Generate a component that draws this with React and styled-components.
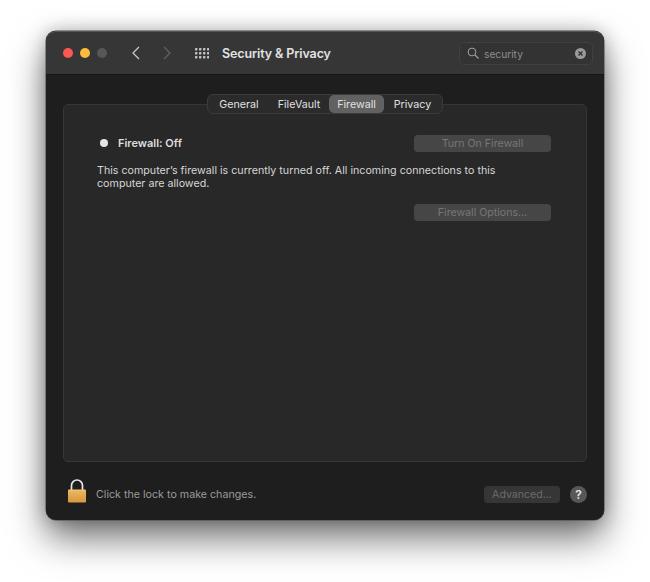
import React from 'react';
import styled, { createGlobalStyle } from 'styled-components';

const GlobalStyle = createGlobalStyle`
  html, body {
    margin: 0;
    padding: 0;
    background: #ffffff;
  }
  body {
    font-family: Inter, "Liberation Sans", sans-serif;
  }
`

const Page = styled.div`
  width: 650px;
  height: 582px;
  box-sizing: border-box;
  padding: 31px 46px 62px;
  overflow: hidden;
`

const Window = styled.div`
  height: 489px;
  display: flex;
  flex-direction: column;
  box-sizing: border-box;
  border-radius: 10px;
  background: #1e1e1e;
  box-shadow: 0 0 0 0.5px #4a4a4a, 0 18px 36px rgba(0, 0, 0, 0.55), 0 0 18px rgba(0, 0, 0, 0.25);
`

const TitleBar = styled.div`
  height: 44px;
  flex: none;
  display: flex;
  align-items: center;
  padding: 0 11px 0 17px;
  background: #363636;
  border-radius: 10px 10px 0 0;
  border-top: 1px solid #555;
  border-bottom: 1px solid #151515;
  box-sizing: border-box;
`

const Lights = styled.div`
  display: flex;
  gap: 7px;
  margin-right: 24px;
`

const Light = styled.span`
  width: 10px;
  height: 10px;
  border-radius: 50%;
  background: ${p => p.color};
`

const NavIcon = styled.svg`
  width: 10px;
  height: 14px;
  margin-right: 21px;
  flex: none;
`

const GridIcon = styled.svg`
  width: 14px;
  height: 11px;
  margin-left: 2px;
  flex: none;
`

const Title = styled.div`
  margin-left: 13px;
  font-size: 12.5px;
  font-weight: 600;
  color: #e2e2e2;
  letter-spacing: -0.1px;
`

const Search = styled.div`
  margin-left: auto;
  width: 134px;
  height: 23px;
  box-sizing: border-box;
  display: flex;
  align-items: center;
  padding: 0 6px 0 7px;
  border: 1px solid #404040;
  border-radius: 5px;
  background: #333333;
  color: #8e8e8e;
  font-size: 10.2px;
`

const SearchText = styled.span`
  margin-left: 5px;
  flex: 1;
  padding-top: 1px;
`

const Clear = styled.span`
  width: 11px;
  height: 11px;
  border-radius: 50%;
  background: #9a9a9a;
  display: flex;
  margin-top: 1px;
`

const Body = styled.div`
  flex: 1;
  display: flex;
  flex-direction: column;
  padding: 19px 17px 0;
  min-height: 0;
`

const TabsRow = styled.div`
  display: flex;
  justify-content: center;
  margin-bottom: -10px;
  position: relative;
  z-index: 1;
`

const Tabs = styled.div`
  display: flex;
  height: 20px;
  width: 236px;
  box-sizing: border-box;
  padding: 0 1px;
  align-items: center;
  background: #2b2b2b;
  border: 1px solid #3b3b3b;
  border-radius: 6px;
`

const Tab = styled.div`
  width: ${p => p.w}px;
  height: 18px;
  display: flex;
  align-items: center;
  justify-content: center;
  font-size: 10.7px;
  color: #e0e0e0;
  border-radius: 5px;
  background: ${p => (p.active ? '#616161' : 'transparent')};
`

const Panel = styled.div`
  height: 358px;
  box-sizing: border-box;
  padding: 30px 35px 0 33px;
  background: #282828;
  border: 1px solid #363636;
  border-radius: 5px;
`

const StatusRow = styled.div`
  display: flex;
  align-items: center;
  justify-content: space-between;
  height: 17px;
`

const Status = styled.div`
  display: flex;
  align-items: center;
  margin-left: 3px;
  margin-bottom: 1px;
  font-size: 11px;
  font-weight: 600;
  color: #dedede;
`

const Dot = styled.span`
  width: 8px;
  height: 8px;
  border-radius: 50%;
  background: #e4e4e4;
  margin-right: 10px;
`

const Description = styled.p`
  margin: 12px 0 0;
  width: 410px;
  font-size: 10.7px;
  line-height: 13px;
  color: #d6d6d6;
`

const DisabledButton = styled.div`
  width: ${p => p.w || 137}px;
  height: 17px;
  display: flex;
  align-items: center;
  justify-content: center;
  border-radius: 4px;
  background: #464646;
  color: #777;
  font-size: 10.6px;
`

const OptionsRow = styled.div`
  display: flex;
  justify-content: flex-end;
  margin-top: 14px;
`

const Footer = styled.div`
  flex: 1;
  display: flex;
  align-items: center;
  padding: 6px 0 0 4px;
`

const LockIcon = styled.svg`
  width: 20px;
  height: 24px;
  flex: none;
  margin-bottom: 6px;
`

const LockText = styled.span`
  margin-left: 9px;
  font-size: 10.7px;
  color: #9b9b9b;
`

const FooterRight = styled.div`
  margin-left: auto;
  display: flex;
  align-items: center;
  gap: 10px;
`

const AdvancedButton = styled(DisabledButton)`
  background: #363636;
  color: #6c6c6c;
`

const Help = styled.div`
  width: 17px;
  height: 17px;
  border-radius: 50%;
  background: #585858;
  color: #e8e8e8;
  font-size: 12px;
  font-weight: 600;
  display: flex;
  align-items: center;
  justify-content: center;
`

const dots = []
for (let row = 0; row < 3; row++) {
  for (let col = 0; col < 4; col++) {
    dots.push([col, row])
  }
}

const lockLines = [13, 15, 17, 19, 21]

const App = () => {
  return (
    <Page>
      <GlobalStyle />
      <Window>
        <TitleBar>
          <Lights>
            <Light color="#fc5753" />
            <Light color="#fdbc40" />
            <Light color="#575757" />
          </Lights>
          <NavIcon viewBox="0 0 10 14">
            <path d="M8 1 2 7l6 6" fill="none" stroke="#c8c8c8" strokeWidth="1.3" />
          </NavIcon>
          <NavIcon viewBox="0 0 10 14">
            <path d="M2 1l6 6-6 6" fill="none" stroke="#626262" strokeWidth="1.3" />
          </NavIcon>
          <GridIcon viewBox="0 0 14 11">
            {dots.map(([col, row]) => (
              <rect key={`${col}-${row}`} x={col * 4} y={row * 4} width="2.4" height="2.4" rx="0.6" fill="#c4c4c4" />
            ))}
          </GridIcon>
          <Title>Security &amp; Privacy</Title>
          <Search>
            <svg width="12" height="12" viewBox="0 0 12 12">
              <circle cx="5" cy="5" r="3.9" fill="none" stroke="#a0a0a0" strokeWidth="1" />
              <path d="M8 8 11.5 11.5" stroke="#a0a0a0" strokeWidth="1.1" />
            </svg>
            <SearchText>security</SearchText>
            <Clear>
              <svg width="11" height="11" viewBox="0 0 11 11">
                <path d="M3.5 3.5l4 4m0-4-4 4" stroke="#303030" strokeWidth="1.3" />
              </svg>
            </Clear>
          </Search>
        </TitleBar>
        <Body>
          <TabsRow>
            <Tabs>
              <Tab w={60}>General</Tab>
              <Tab w={60}>FileVault</Tab>
              <Tab w={55} active>Firewall</Tab>
              <Tab w={57}>Privacy</Tab>
            </Tabs>
          </TabsRow>
          <Panel>
            <StatusRow>
              <Status>
                <Dot />
                Firewall: Off
              </Status>
              <DisabledButton>Turn On Firewall</DisabledButton>
            </StatusRow>
            <Description>
              This computer’s firewall is currently turned off. All incoming connections to this computer are allowed.
            </Description>
            <OptionsRow>
              <DisabledButton>Firewall Options...</DisabledButton>
            </OptionsRow>
          </Panel>
          <Footer>
            <LockIcon viewBox="0 0 20 24">
              <defs>
                <linearGradient id="lockBody" x1="0" y1="0" x2="0" y2="1">
                  <stop offset="0" stopColor="#f4c56c" />
                  <stop offset="1" stopColor="#d9983c" />
                </linearGradient>
              </defs>
              <path d="M4.5 11V6.5a5.5 5.5 0 0 1 11 0V11" fill="none" stroke="#e8e8e8" strokeWidth="1.7" />
              <rect x="1" y="10.5" width="18" height="13" rx="1" fill="url(#lockBody)" />
              {lockLines.map(y => (
                <path key={y} d={`M1 ${y}h18`} stroke="#c98e3a" strokeWidth="0.4" />
              ))}
            </LockIcon>
            <LockText>Click the lock to make changes.</LockText>
            <FooterRight>
              <AdvancedButton w={76}>Advanced...</AdvancedButton>
              <Help>?</Help>
            </FooterRight>
          </Footer>
        </Body>
      </Window>
    </Page>
  )
}

export default App
